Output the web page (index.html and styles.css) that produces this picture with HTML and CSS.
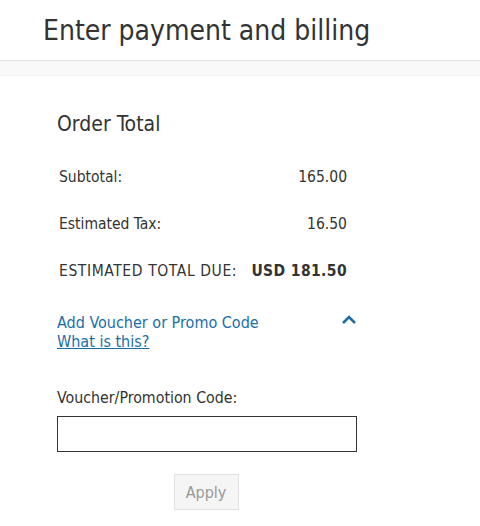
FILE: index.html
```html
<!DOCTYPE html>
<html lang="en">
<head>
<meta charset="utf-8">
<title>Enter payment and billing</title>
<link rel="stylesheet" href="styles.css">
</head>
<body>
<header class="page-header">
  <h1 class="page-title">Enter payment and billing</h1>
</header>
<div class="band"></div>
<main class="content">
  <h2 class="section-title">Order Total</h2>
  <div class="summary">
    <div class="row"><span>Subtotal:</span><span>165.00</span></div>
    <div class="row"><span>Estimated Tax:</span><span>16.50</span></div>
    <div class="row total"><span class="total-label">ESTIMATED TOTAL DUE:</span><span class="amount">USD 181.50</span></div>
  </div>
  <div class="voucher-toggle">
    <div class="voucher-links">
      <a class="voucher-link" href="#">Add Voucher or Promo Code</a>
      <a class="what-link" href="#">What is this?</a>
    </div>
    <svg class="chevron" width="16" height="10" viewBox="0 0 16 10"><path d="M2 8 L8 2 L14 8" fill="none" stroke="#1a6ea8" stroke-width="2.6"/></svg>
  </div>
  <label class="field-label" for="code">Voucher/Promotion Code:</label>
  <input class="code-input" id="code" type="text">
  <div class="actions">
    <button class="apply-btn" type="button">Apply</button>
  </div>
</main>
</body>
</html>
```
FILE: styles.css
```css
html, body {
  margin: 0;
  padding: 0;
  background: #fff;
  font-family: "DejaVu Sans Condensed", "DejaVu Sans", sans-serif;
  color: #333;
}
.page-header {
  height: 61px;
  border-bottom: 1px solid #e3e3e3;
  box-sizing: border-box;
  padding-left: 43px;
  display: flex;
  align-items: center;
}
.page-title {
  margin: 0;
  font-size: 28px;
  font-weight: normal;
  color: #333;
}
.band {
  height: 14px;
  background: #f9f9f9;
  border-bottom: 1px solid #f0f0f0;
}
.content {
  padding: 35px 0 0 57px;
  width: 300px;
}
.section-title {
  margin: 0 0 30px;
  font-size: 21px;
  line-height: 26px;
  font-weight: normal;
  color: #333;
}
.summary {
  width: 288px;
  padding-left: 2px;
}
.row {
  display: flex;
  justify-content: space-between;
  font-size: 15.5px;
  line-height: 20px;
  height: 47px;
  color: #333;
}
.total-label {
  letter-spacing: 0.6px;
}
.row.total .amount {
  font-weight: bold;
  letter-spacing: 0.4px;
}
.voucher-toggle {
  display: flex;
  justify-content: space-between;
  align-items: flex-start;
  margin-top: 5px;
}
.voucher-links {
  display: flex;
  flex-direction: column;
  font-size: 16px;
  line-height: 19px;
}
.voucher-link {
  color: #1a6ea8;
  text-decoration: none;
}
.what-link {
  color: #1a6ea8;
  text-decoration: underline;
}
.chevron {
  margin-top: 2px;
}
.field-label {
  display: block;
  margin-top: 37px;
  font-size: 15.8px;
  line-height: 20px;
  color: #333;
}
.code-input {
  display: block;
  box-sizing: border-box;
  width: 300px;
  height: 36px;
  margin-top: 8px;
  border: 1px solid #333;
  border-radius: 0;
  padding: 0 8px;
}
.actions {
  display: flex;
  justify-content: center;
  margin-top: 22px;
  padding-right: 2px;
}
.apply-btn {
  width: 65px;
  height: 36px;
  background: #f5f5f5;
  border: 1px solid #e0e0e0;
  border-radius: 0;
  color: #999;
  font-family: inherit;
  font-size: 16px;
}
```
